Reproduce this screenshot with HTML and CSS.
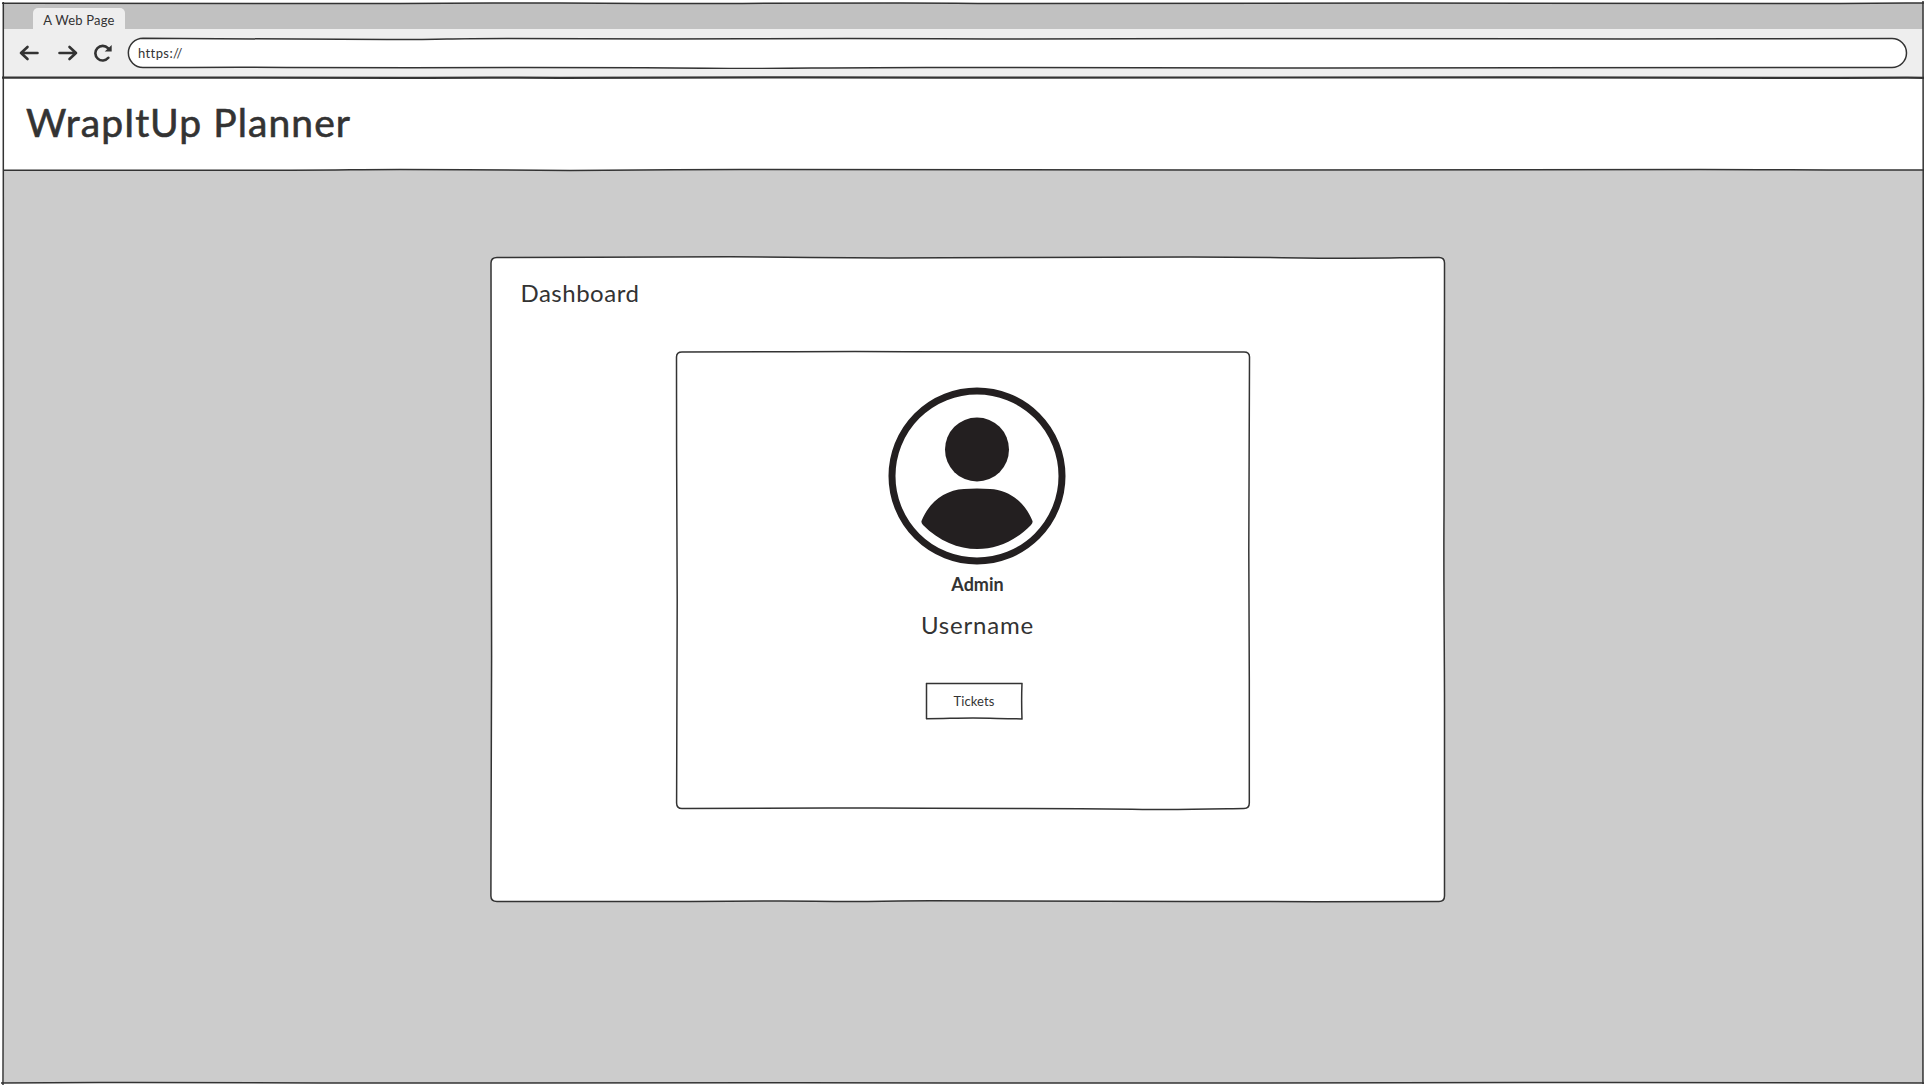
FILE: index.html
```html
<!DOCTYPE html>
<html lang="en">
<head>
<meta charset="utf-8">
<title>WrapItUp Planner</title>
<link rel="stylesheet" href="styles.css">
</head>
<body>
<div class="window">
  <div class="tabs"><div class="tab"><span class="tab-label">A Web Page</span></div></div>
  <div class="toolbar">
    <svg class="nav-icon" width="20" height="16" viewBox="0 0 20 16"><path d="M18.500 8H2M8.500 2 2 8l6.500 6"/></svg>
    <svg class="nav-icon forward" width="20" height="16" viewBox="0 0 20 16"><path d="M1.500 8H18M11.500 2 18 8l-6.500 6"/></svg>
    <svg class="nav-icon reload" width="20" height="18" viewBox="0 0 20 18"><path d="M15 4.200A7.300 7.300 0 1 0 15.300 13.800"/><path class="tip" d="M18.700 1v6.500h-7z"/></svg>
    <div class="address">
      <svg class="sketch" viewBox="0 0 1781 32"><path d="M16 1.200C80 1.200 180 2.500 260 2.500S300 1.500 380 1.500S460 2 540 2S620 1.500 720 1.500S800 2 860 2S940 1.500 1100 1.500S1400 2 1500 2S1640 1.500 1765 1.500A14.500 14.500 0 0 1 1765 30.500C1600 30.500 1400 31 1200 31S900 30.500 800 30.500S640 32 580 31.300S450 30.500 400 30.500S200 31 160 30.500S60 30.500 16 30.500A14.500 14.500 0 0 1 16 1.200Z"/></svg>
      <span class="url">https://</span>
    </div>
  </div>
  <header class="header"><h1 class="brand">WrapItUp Planner</h1></header>
  <main class="content">
    <section class="panel">
      <svg class="sketch" viewBox="0 0 956 647"><path d="M7 1.500C80 1.500 180 .8 240 .8S340 2 400 2S460 1.500 540 1.500S620 1 700 1S800 2.200 860 2.200S900 1.500 949 1.500Q954.500 1.500 954.500 7C954.500 100 954.500 200 954 260S954.500 400 954.500 450S954 560 954.500 640Q954.500 645.500 949 645.500C850 645.500 800 646 700 645.500S500 644.800 440 644.800S370 646 350 645.500S250 645 200 645.500S80 645.500 7 645.500Q.9 645.500 .9 640C.9 570 1.600 520 1.600 400S1.200 200 1.200 150S1 50 1 7Q1 1.500 7 1.500Z"/></svg>
      <h2 class="panel-title">Dashboard</h2>
      <div class="card">
        <svg class="sketch" viewBox="0 0 576 461"><path d="M7 2C80 2 120 1.500 180 1.500S260 2 360 2S480 2 569 2Q574.500 2 574.500 7C574.500 90 573.800 120 573.800 200S574.300 280 574.300 330S574.300 400 574.300 453Q574.300 458.500 569 458.500C540 459 520 459.500 490 459.500S440 458.500 350 458.500S260 458 200 458S120 458.500 7 458.500Q1.600 458.500 1.600 453C1.600 360 2.200 300 2.200 250S1.600 150 1.600 100S1.500 50 1.500 7Q1.500 2 7 2Z"/></svg>
        <svg class="avatar" width="178" height="178" viewBox="0 0 178 178"><circle class="ring" cx="89" cy="89" r="85"/><circle cx="89" cy="62.500" r="32"/><path d="M33.500 134C41 115 57 103 76 102Q89 101 102 102C121 103 137 115 144.500 134Q145 136 143 138C112 170 67 170 35 138Q33 136 33.500 134Z"/></svg>
        <strong class="role">Admin</strong>
        <span class="username">Username</span>
        <button class="button">
          <svg class="sketch" viewBox="0 0 98 38"><path d="M1 1.500H97.500M1.500 1V37M1 36.700C20 36.700 30 36 48 36S75 36.700 97.500 36.900M97 1Q96.300 18 97 37.500"/></svg>
          <span class="button-label">Tickets</span>
        </button>
      </div>
    </section>
  </main>
  <svg class="frame" viewBox="0 0 1926 1086"><path d="M2 3.200C150 3.200 300 3.700 400 3.500S480 2.800 560 3S640 3.600 700 3.500S800 3 900 3S960 3.700 1020 3.600S1200 3 1400 3S1780 3.800 1840 3.500S1900 3 1924 3M3.300 2C3.300 150 3.300 250 3.500 400S3 700 3.500 800S3 1000 3 1085M1923 1C1923 150 1923.500 250 1923.500 400S1922.500 700 1922.500 800S1923 1000 1923 1084M1 1083C80 1083 90 1082.300 130 1082.500S300 1083.200 400 1083S650 1082.300 800 1082.700S1000 1083 1200 1083S1500 1082.300 1600 1082.500S1800 1083 1924 1083M3 170C150 170 200 170.200 280 170.200S340 169.500 400 169.500S500 170.400 570 170.400S680 169.300 740 169.500S900 170.200 1200 170S1600 169.500 1700 169.500S1800 170.500 1924 170"/><path class="heavy" d="M2 77.600C150 77.200 300 77.600 400 77.800S500 77.200 560 77.800S700 77.200 800 77.400S940 77.800 1020 77.700S1300 77.300 1500 77.300S1780 78.200 1840 77.900S1900 77.600 1924 77.800"/></svg>
</div>
</body>
</html>
```
FILE: styles.css
```css
* { box-sizing: border-box; }
body { margin: 0; background: #fff; color: #333; font-family: Lato, "Open Sans", sans-serif; }
.window { position: relative; display: flex; flex-direction: column; width: 1926px; height: 1086px; padding: 3px; overflow: hidden; }
.frame, .sketch { position: absolute; inset: 0; width: 100%; height: 100%; fill: none; stroke: #333; stroke-width: 1.5; pointer-events: none; }
.frame .heavy { stroke-width: 2.2; }
.tabs { display: flex; align-items: flex-end; height: 26px; padding-left: 30px; background: #c1c1c1; }
.tab { width: 92px; height: 21px; padding-top: 4px; background: #eee; border-radius: 5px 5px 0 0; text-align: center; line-height: 17px; }
.tab-label { display: block; font-size: 13px; letter-spacing: .2px; }
.toolbar { display: flex; align-items: center; height: 49px; padding: 0 15px 1px 16px; background: #eee; }
.nav-icon { flex: none; margin-right: 19px; fill: none; stroke: #333; stroke-width: 2.6; stroke-linecap: round; stroke-linejoin: round; }
.nav-icon.forward { margin-right: 15px; }
.nav-icon.reload { margin-right: 14px; }
.nav-icon .tip { fill: #333; stroke: none; }
.address { position: relative; display: flex; flex: none; align-items: center; width: 1781px; height: 32px; padding-left: 11px; }
.address .sketch { fill: #fff; }
.url { position: relative; font-size: 13px; letter-spacing: .4px; }
.header { display: flex; align-items: center; height: 92px; padding: 0 0 4px 23px; background: #fff; }
.brand { margin: 0; font-size: 39px; font-weight: 400; line-height: 48px; letter-spacing: 1.1px; -webkit-text-stroke: .6px #333; }
.content { display: flex; flex: 1; flex-direction: column; align-items: center; margin-left: 1px; padding: 86px 0 0 8px; background: #ccc; }
.panel { position: relative; display: flex; flex-direction: column; width: 956px; height: 647px; padding: 22px 0 0 31px; }
.panel > .sketch { fill: #fff; }
.panel-title { position: relative; margin: 0; font-size: 24px; font-weight: 400; line-height: 30px; letter-spacing: .5px; }
.card { position: relative; display: flex; flex-direction: column; align-items: center; width: 576px; height: 461px; margin: 42px 0 0 154px; padding: 37px 0 0 29px; }
.avatar { fill: #231f20; }
.avatar .ring { fill: none; stroke: #231f20; stroke-width: 7; }
.role { margin-top: 7px; padding-left: 1px; font-size: 18px; line-height: 24px; }
.username { margin-top: 14px; padding-left: 1px; font-size: 24px; line-height: 30px; letter-spacing: .8px; }
.button { position: relative; width: 98px; height: 38px; margin: 42px 6px 0 0; padding: 0; border: 0; background: #fff; color: #333; font: 13px Lato, sans-serif; }
.button-label { position: relative; letter-spacing: .1px; }
```
